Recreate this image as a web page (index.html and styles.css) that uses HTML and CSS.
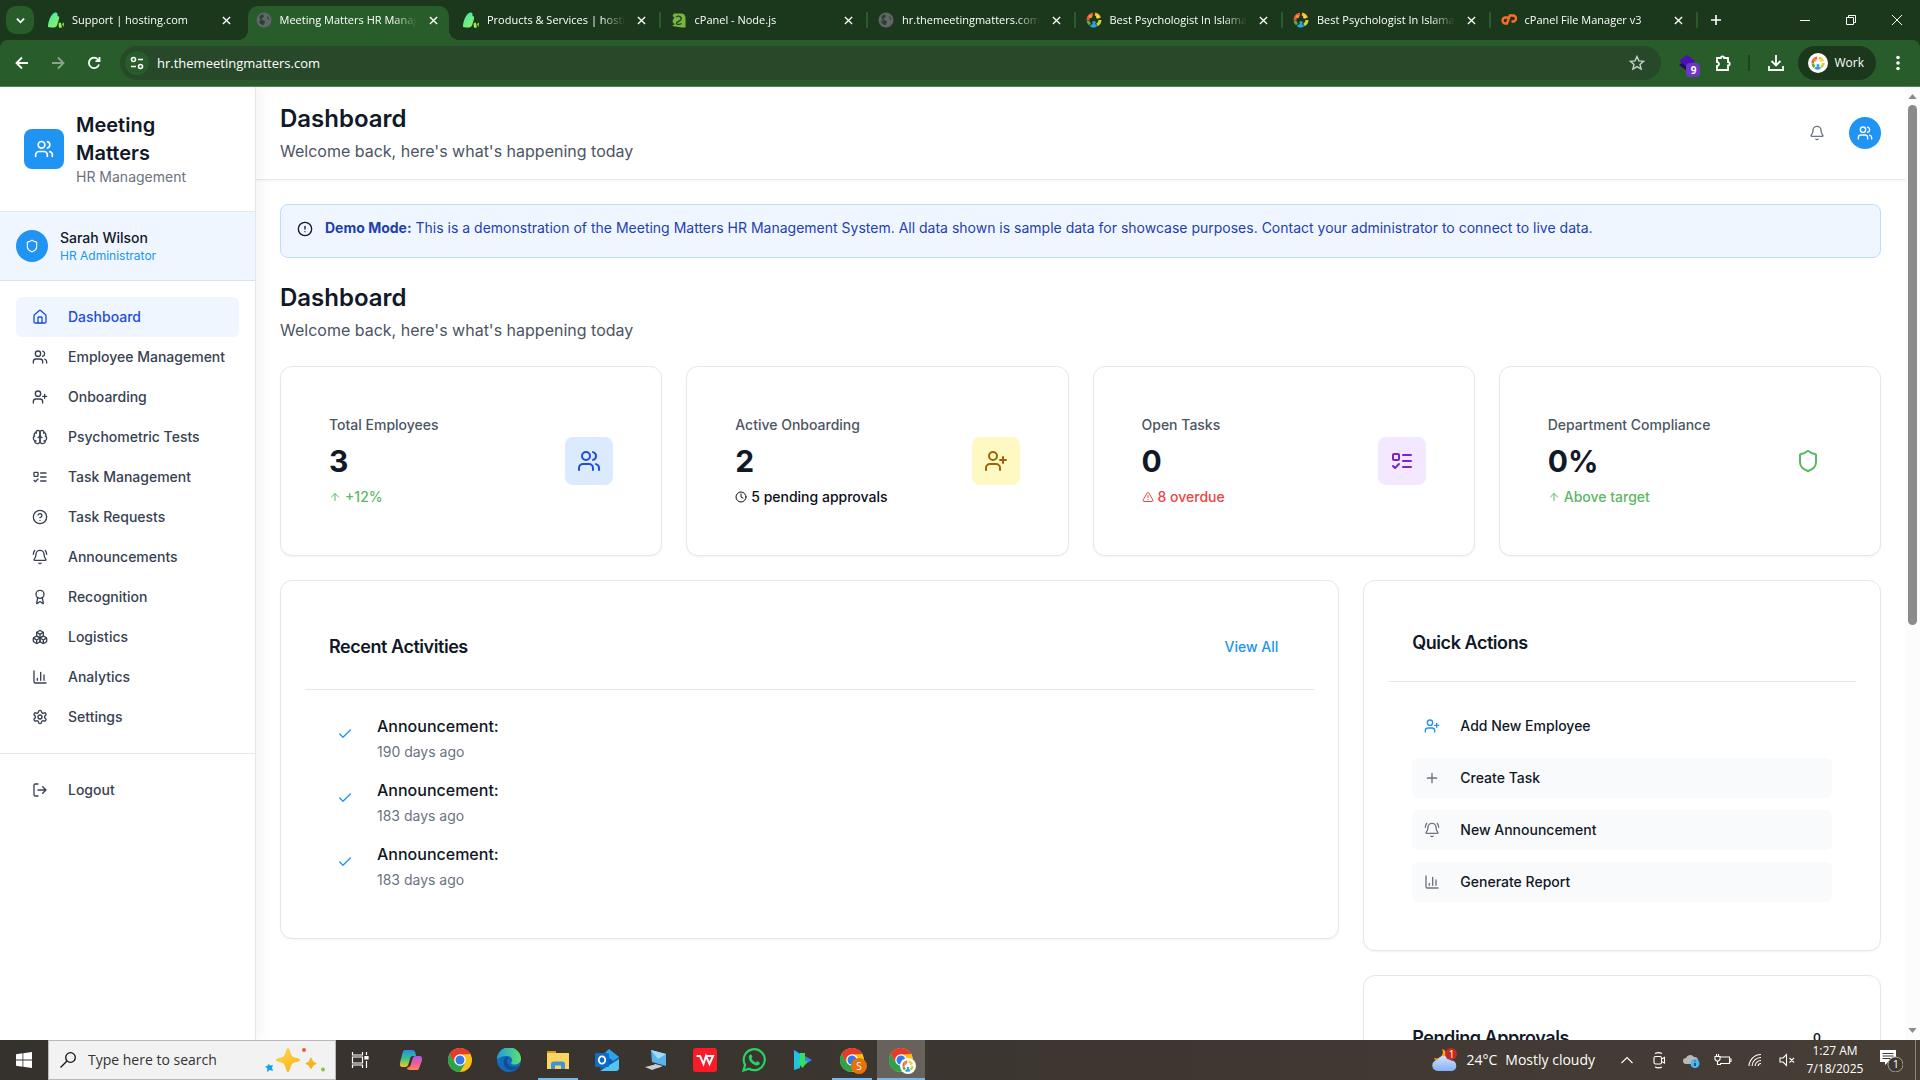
FILE: index.html
```html
<!DOCTYPE html>
<html lang="en">
<head>
<meta charset="utf-8">
<title>Meeting Matters HR Management</title>
<link rel="stylesheet" href="styles.css">
</head>
<body>
<svg class="sprite" aria-hidden="true">
  <defs>
    <linearGradient id="g-leaf" x1="0" y1="0" x2="1" y2="1"><stop offset="0" stop-color="#3fe6c0"/><stop offset="1" stop-color="#a6f23c"/></linearGradient>
    <linearGradient id="g-edge" x1="0" y1="0" x2="1" y2="0"><stop offset="0" stop-color="#1b9de2"/><stop offset="1" stop-color="#5fe06a"/></linearGradient>
    <linearGradient id="g-star" x1="0" y1="0" x2="1" y2="1"><stop offset="0" stop-color="#ffd84a"/><stop offset="1" stop-color="#f5a910"/></linearGradient>
    <linearGradient id="g-cop1" x1="0" y1="0" x2="0" y2="1"><stop offset="0" stop-color="#1f8fe8"/><stop offset=".5" stop-color="#3cc08a"/><stop offset="1" stop-color="#f6c81e"/></linearGradient>
    <linearGradient id="g-cop2" x1="0" y1="0" x2="0" y2="1"><stop offset="0" stop-color="#a45cf0"/><stop offset=".5" stop-color="#ef5aa0"/><stop offset="1" stop-color="#ff8a4c"/></linearGradient>
    <linearGradient id="g-cloud" x1="0" y1="0" x2="0" y2="1"><stop offset="0" stop-color="#cfe0fb"/><stop offset="1" stop-color="#86b1f3"/></linearGradient>
  </defs>
  <symbol id="users" viewBox="0 0 24 24"><path d="M16 21v-2a4 4 0 0 0-4-4H6a4 4 0 0 0-4 4v2"/><circle cx="9" cy="7" r="4"/><path d="M22 21v-2a4 4 0 0 0-3-3.87M16 3.13a4 4 0 0 1 0 7.75"/></symbol>
  <symbol id="user-plus" viewBox="0 0 24 24"><path d="M16 21v-2a4 4 0 0 0-4-4H6a4 4 0 0 0-4 4v2"/><circle cx="9" cy="7" r="4"/><path d="M19 8v6M22 11h-6"/></symbol>
  <symbol id="shield" viewBox="0 0 24 24"><path d="M20 13c0 5-3.5 7.5-7.66 8.95a1 1 0 0 1-.67-.01C7.5 20.5 4 18 4 13V6a1 1 0 0 1 1-1c2 0 4.5-1.2 6.24-2.72a1.17 1.17 0 0 1 1.52 0C14.51 3.81 17 5 19 5a1 1 0 0 1 1 1z"/></symbol>
  <symbol id="house" viewBox="0 0 24 24"><path d="M15 21v-8a1 1 0 0 0-1-1h-4a1 1 0 0 0-1 1v8"/><path d="M3 10a2 2 0 0 1 .709-1.528l7-5.999a2 2 0 0 1 2.582 0l7 5.999A2 2 0 0 1 21 10v9a2 2 0 0 1-2 2H5a2 2 0 0 1-2-2z"/></symbol>
  <symbol id="brain" viewBox="0 0 24 24"><path d="M12 5a3 3 0 1 0-5.997.125 4 4 0 0 0-2.526 5.77 4 4 0 0 0 .556 6.588A4 4 0 1 0 12 18Z"/><path d="M12 5a3 3 0 1 1 5.997.125 4 4 0 0 1 2.526 5.77 4 4 0 0 1-.556 6.588A4 4 0 1 1 12 18Z"/><path d="M15 13a4.5 4.5 0 0 1-3-4 4.5 4.5 0 0 1-3 4M17.599 6.5a3 3 0 0 0 .399-1.375M6.003 5.125A3 3 0 0 0 6.401 6.5M3.477 10.896a4 4 0 0 1 .585-.396M19.938 10.5a4 4 0 0 1 .585.396M6 18a4 4 0 0 1-1.967-.516M19.967 17.484A4 4 0 0 1 18 18"/></symbol>
  <symbol id="list-todo" viewBox="0 0 24 24"><rect x="3" y="5" width="6" height="6" rx="1"/><path d="m3 17 2 2 4-4M13 6h8M13 12h8M13 18h8"/></symbol>
  <symbol id="help" viewBox="0 0 24 24"><circle cx="12" cy="12" r="10"/><path d="M9.09 9a3 3 0 0 1 5.83 1c0 2-3 3-3 3M12 17h.01"/></symbol>
  <symbol id="bell-ring" viewBox="0 0 24 24"><path d="M10.268 21a2 2 0 0 0 3.464 0M22 8c0-2.3-.8-4.3-2-6M3.262 15.326A1 1 0 0 0 4 17h16a1 1 0 0 0 .74-1.673C19.41 13.956 18 12.499 18 8A6 6 0 0 0 6 8c0 4.499-1.411 5.956-2.738 7.326M4 2C2.8 3.7 2 5.7 2 8"/></symbol>
  <symbol id="bell" viewBox="0 0 24 24"><path d="M10.268 21a2 2 0 0 0 3.464 0M3.262 15.326A1 1 0 0 0 4 17h16a1 1 0 0 0 .74-1.673C19.41 13.956 18 12.499 18 8A6 6 0 0 0 6 8c0 4.499-1.411 5.956-2.738 7.326"/></symbol>
  <symbol id="award" viewBox="0 0 24 24"><path d="m15.477 12.89 1.515 8.526a.5.5 0 0 1-.81.47l-3.58-2.687a1 1 0 0 0-1.197 0l-3.586 2.686a.5.5 0 0 1-.81-.469l1.514-8.526"/><circle cx="12" cy="8" r="6"/></symbol>
  <symbol id="boxes" viewBox="0 0 24 24"><path d="M2.97 12.92A2 2 0 0 0 2 14.63v3.24a2 2 0 0 0 .97 1.71l3 1.8a2 2 0 0 0 2.06 0L12 19v-5.5l-5-3-4.03 2.42Z"/><path d="m7 16.5-4.74-2.85M7 16.5l5-3M7 16.5v5.17"/><path d="M12 13.5V19l3.97 2.38a2 2 0 0 0 2.06 0l3-1.8a2 2 0 0 0 .97-1.71v-3.24a2 2 0 0 0-.97-1.71L17 10.5l-5 3Z"/><path d="m17 16.5-5-3M17 16.5l4.74-2.85M17 16.5v5.17"/><path d="M7.97 4.42A2 2 0 0 0 7 6.13v4.37l5 3 5-3V6.13a2 2 0 0 0-.97-1.71l-3-1.8a2 2 0 0 0-2.06 0l-3 1.8Z"/><path d="M12 8 7.26 5.15M12 8l4.74-2.85M12 13.5V8"/></symbol>
  <symbol id="chart" viewBox="0 0 24 24"><path d="M3 3v16a2 2 0 0 0 2 2h16M18 17V9M13 17V5M8 17v-3"/></symbol>
  <symbol id="gear" viewBox="0 0 24 24"><path d="M12.22 2h-.44a2 2 0 0 0-2 2v.18a2 2 0 0 1-1 1.73l-.43.25a2 2 0 0 1-2 0l-.15-.08a2 2 0 0 0-2.73.73l-.22.38a2 2 0 0 0 .73 2.73l.15.1a2 2 0 0 1 1 1.72v.51a2 2 0 0 1-1 1.74l-.15.09a2 2 0 0 0-.73 2.73l.22.38a2 2 0 0 0 2.73.73l.15-.08a2 2 0 0 1 2 0l.43.25a2 2 0 0 1 1 1.73V20a2 2 0 0 0 2 2h.44a2 2 0 0 0 2-2v-.18a2 2 0 0 1 1-1.73l.43-.25a2 2 0 0 1 2 0l.15.08a2 2 0 0 0 2.73-.73l.22-.39a2 2 0 0 0-.73-2.73l-.15-.08a2 2 0 0 1-1-1.74v-.5a2 2 0 0 1 1-1.74l.15-.09a2 2 0 0 0 .73-2.73l-.22-.38a2 2 0 0 0-2.73-.73l-.15.08a2 2 0 0 1-2 0l-.43-.25a2 2 0 0 1-1-1.73V4a2 2 0 0 0-2-2z"/><circle cx="12" cy="12" r="3"/></symbol>
  <symbol id="logout" viewBox="0 0 24 24"><path d="M9 21H5a2 2 0 0 1-2-2V5a2 2 0 0 1 2-2h4M16 17l5-5-5-5M21 12H9"/></symbol>
  <symbol id="alert" viewBox="0 0 24 24"><circle cx="12" cy="12" r="10"/><path d="M12 8v4M12 16h.01"/></symbol>
  <symbol id="arrow-up" viewBox="0 0 24 24"><path d="m5 12 7-7 7 7M12 19V5"/></symbol>
  <symbol id="clock" viewBox="0 0 24 24"><circle cx="12" cy="12" r="10"/><path d="M12 6v6l4 2"/></symbol>
  <symbol id="warning" viewBox="0 0 24 24"><path d="m21.73 18-8-14a2 2 0 0 0-3.48 0l-8 14A2 2 0 0 0 4 21h16a2 2 0 0 0 1.73-3M12 9v4M12 17h.01"/></symbol>
  <symbol id="check" viewBox="0 0 24 24"><path d="M20 6 9 17l-5-5"/></symbol>
  <symbol id="plus" viewBox="0 0 24 24"><path d="M5 12h14M12 5v14"/></symbol>
  <symbol id="x" viewBox="0 0 10 10"><path d="M1 1l8 8M9 1l-8 8"/></symbol>
  <symbol id="leaf" viewBox="0 0 16 16"><path fill="url(#g-leaf)" d="M0 15C0 9 3 2 7 .5 9 0 10 1.500 9.500 4 11 4 11.500 5 11 7l-2 6.500C8 15 7 15.500 5.500 15.500L3 15.500zM10.500 12c.4-1.500 2-2 2.500-.8L14 15.500l-3 .2zM14 12l2-1.500-.5 4.500z"/></symbol>
  <symbol id="globe" viewBox="0 0 16 16"><circle cx="8" cy="8" r="7.500" fill="#62666a"/><path fill="#27452b" d="M3.500 4.500c1.200-1.500 2.500-2 4-2C7 3.500 8.200 4 7.500 5.200 6.500 6 5.500 6 5.500 7.200 6.500 8.500 9 8 9 10c0 1.300-1.300 1.800-1.500 3.300C5 12.800 3.200 11 2.800 9l2 .4C4.600 7.800 3.200 7 3.500 4.500zM11 3.800c1.200.8 2 2 2.300 3.700-1.200.4-2-.4-1.600-1.500.2-.8-.9-1.200-.7-2.200z"/></symbol>
  <symbol id="node" viewBox="0 0 16 16"><path fill="#7cb342" d="M3 1.500h7c3 0 4.500 2 4.500 4.500v9.500H11L1 14l3-2c-2-.5-3-2-2-4.500l1.500-2L1.500 4z"/><path fill="none" stroke="#1c4a1e" stroke-width="1.400" d="M5 5c3-2 6 0 5 2.500-1 2-4 2-4.500 3.500s3 2 5 .5"/></symbol>
  <symbol id="psy" viewBox="0 0 16 16"><g fill="none" stroke-width="3"><path stroke="#f05a3c" d="M2 8a6 6 0 0 1 5-6"/><path stroke="#fbc02d" d="M9 2a6 6 0 0 1 4.500 4"/><path stroke="#c8d63a" d="M14 8a6 6 0 0 1-3 5"/><path stroke="#66a83e" d="M2 8.500A6 6 0 0 0 4 12.500"/></g><path fill="#29a3e8" d="M4 14.500c.5-2 2-2 3-2.500L6 10l2-1 2 1-1 2c1 .5 2 1 2 2.500-2 1.500-5 1.500-7 0z"/><circle cx="4.500" cy="4.500" r="1.800" fill="#ff8a3c"/><circle cx="11.500" cy="5" r="1.500" fill="#ffd83a"/></symbol>
  <symbol id="cpanel" viewBox="0 0 16 16"><g fill="none" stroke="#ff6c2c" stroke-width="2.300"><path d="M7 5.500H4.500a3 3 0 0 0 0 6H6L8.800 3.500H12a3 3 0 0 1 0 6h-1.500"/></g></symbol>
  <symbol id="chrome" viewBox="0 0 24 24"><circle cx="12" cy="12" r="12" fill="#fbc116"/><path fill="#e33b2e" d="M1.600 6A12 12 0 0 1 22.400 6L12 6.600 6.800 15z"/><path fill="#2ba24c" d="M1.600 6A12 12 0 0 0 12 24l5.200-9-5.200 2.400L6.800 15z"/><circle cx="12" cy="12" r="5.800" fill="#fff"/><circle cx="12" cy="12" r="4.500" fill="#2f7cea"/></symbol>
</svg>

<header class="browser">
  <div class="tabstrip">
    <button class="tab-search" aria-label="Search tabs"><svg viewBox="0 0 10 10"><path d="M1 3l4 4 4-4"/></svg></button>
    <div class="tabs">
      <div class="tab"><svg class="fav"><use href="#leaf"/></svg><span class="tab-title">Support | hosting.com</span><button class="tab-close" aria-label="Close tab"><svg><use href="#x"/></svg></button></div>
      <div class="tab active"><svg class="fav"><use href="#globe"/></svg><span class="tab-title">Meeting Matters HR Management</span><button class="tab-close" aria-label="Close tab"><svg><use href="#x"/></svg></button></div>
      <div class="tab split"><svg class="fav"><use href="#leaf"/></svg><span class="tab-title">Products &amp; Services | hosting.com</span><button class="tab-close" aria-label="Close tab"><svg><use href="#x"/></svg></button></div>
      <div class="tab split"><svg class="fav"><use href="#node"/></svg><span class="tab-title">cPanel - Node.js</span><button class="tab-close" aria-label="Close tab"><svg><use href="#x"/></svg></button></div>
      <div class="tab split"><svg class="fav"><use href="#globe"/></svg><span class="tab-title">hr.themeetingmatters.com</span><button class="tab-close" aria-label="Close tab"><svg><use href="#x"/></svg></button></div>
      <div class="tab split"><svg class="fav"><use href="#psy"/></svg><span class="tab-title">Best Psychologist In Islamabad</span><button class="tab-close" aria-label="Close tab"><svg><use href="#x"/></svg></button></div>
      <div class="tab split"><svg class="fav"><use href="#psy"/></svg><span class="tab-title">Best Psychologist In Islamabad</span><button class="tab-close" aria-label="Close tab"><svg><use href="#x"/></svg></button></div>
      <div class="tab split"><svg class="fav"><use href="#cpanel"/></svg><span class="tab-title">cPanel File Manager v3</span><button class="tab-close" aria-label="Close tab"><svg><use href="#x"/></svg></button></div>
    </div>
    <button class="new-tab" aria-label="New tab"><svg viewBox="0 0 12 12"><path d="M6 1v10M1 6h10"/></svg></button>
    <div class="window-controls">
      <button aria-label="Minimize"><svg viewBox="0 0 10 10"><path d="M0 5.500h10"/></svg></button>
      <button aria-label="Restore"><svg viewBox="0 0 10 10"><path d="M.5 2.500h7v7h-7zM2.500 2.500v-2h7v7h-2"/></svg></button>
      <button aria-label="Close"><svg viewBox="0 0 10 10"><path d="M0 0l10 10M10 0L0 10"/></svg></button>
    </div>
  </div>
  <div class="toolbar">
    <button class="tool" aria-label="Back"><svg viewBox="0 0 16 16"><path d="M14 8H3M8 2.500L2.500 8 8 13.500"/></svg></button>
    <button class="tool dim" aria-label="Forward"><svg viewBox="0 0 16 16"><path d="M2 8h11M8 2.500L13.500 8 8 13.500"/></svg></button>
    <button class="tool" aria-label="Reload"><svg viewBox="0 0 16 16"><path d="M13 9.500A5.200 5.200 0 1 1 12 4.500l1.500 1.500M13.500 2v4.200h-4"/></svg></button>
    <div class="omnibox">
      <button class="site-info" aria-label="Site information"><svg viewBox="0 0 16 16"><circle cx="4.500" cy="4.500" r="2"/><path d="M9 4.500h5M2 11.500h5"/><circle cx="11.500" cy="11.500" r="2"/></svg></button>
      <input class="url" type="text" aria-label="Address" value="hr.themeetingmatters.com">
      <button class="star" aria-label="Bookmark"><svg viewBox="0 0 16 16"><path d="M8 1.500l1.900 4.400 4.700.4-3.600 3.100 1.100 4.700L8 11.600l-4.100 2.500L5 9.400 1.400 6.300l4.700-.4z"/></svg></button>
    </div>
    <div class="tool-group">
      <button class="tool ext" aria-label="Extension"><svg viewBox="0 0 18 18"><path d="M9 1l8 6-8 6-8-6z" fill="#4a0fb5" stroke="none"/><path d="M1 11l3-2 5 4 4-3v3l-4 4z" fill="#23086b" stroke="none"/></svg><span class="ext-badge">9</span></button>
      <button class="tool" aria-label="Extensions"><svg viewBox="0 0 16 16"><path d="M2 3h3.800a1.700 1.700 0 0 1 3.400 0H13v4a1.700 1.700 0 0 1 0 3.400V15H2v-4a2 2 0 0 0 0-4z"/></svg></button>
    </div>
    <span class="tool-divider"></span>
    <button class="tool" aria-label="Downloads"><svg viewBox="0 0 16 16"><path d="M8 0v10M3.500 6L8 10.500 12.500 6M1 11v4h14v-4"/></svg></button>
    <button class="profile"><span class="profile-pic"><svg><use href="#psy"/></svg></span>Work</button>
    <button class="tool" aria-label="Menu"><svg class="dots" viewBox="0 0 16 16"><circle cx="8" cy="2.500" r="1.800"/><circle cx="8" cy="8" r="1.800"/><circle cx="8" cy="13.500" r="1.800"/></svg></button>
  </div>
</header>

<div class="app">
  <aside class="sidebar">
    <div class="brand">
      <span class="brand-logo"><svg class="ico ico-20"><use href="#users"/></svg></span>
      <div><p class="brand-name">Meeting<br>Matters</p><p class="brand-sub">HR Management</p></div>
    </div>
    <div class="user">
      <span class="avatar"><svg class="ico ico-14"><use href="#shield"/></svg></span>
      <div><p class="user-name">Sarah Wilson</p><p class="user-role">HR Administrator</p></div>
    </div>
    <nav class="nav">
      <a class="nav-link current" href="#"><svg class="ico"><use href="#house"/></svg>Dashboard</a>
      <a class="nav-link" href="#"><svg class="ico"><use href="#users"/></svg>Employee Management</a>
      <a class="nav-link" href="#"><svg class="ico"><use href="#user-plus"/></svg>Onboarding</a>
      <a class="nav-link" href="#"><svg class="ico"><use href="#brain"/></svg>Psychometric Tests</a>
      <a class="nav-link" href="#"><svg class="ico"><use href="#list-todo"/></svg>Task Management</a>
      <a class="nav-link" href="#"><svg class="ico"><use href="#help"/></svg>Task Requests</a>
      <a class="nav-link" href="#"><svg class="ico"><use href="#bell-ring"/></svg>Announcements</a>
      <a class="nav-link" href="#"><svg class="ico"><use href="#award"/></svg>Recognition</a>
      <a class="nav-link" href="#"><svg class="ico"><use href="#boxes"/></svg>Logistics</a>
      <a class="nav-link" href="#"><svg class="ico"><use href="#chart"/></svg>Analytics</a>
      <a class="nav-link" href="#"><svg class="ico"><use href="#gear"/></svg>Settings</a>
    </nav>
    <div class="nav nav-foot">
      <button class="nav-link"><svg class="ico"><use href="#logout"/></svg>Logout</button>
    </div>
  </aside>

  <div class="page">
    <header class="page-head">
      <div><h1 class="title">Dashboard</h1><p class="subtitle">Welcome back, here's what's happening today</p></div>
      <div class="head-actions">
        <button class="bell" aria-label="Notifications"><svg class="ico"><use href="#bell"/></svg></button>
        <span class="avatar"><svg class="ico"><use href="#users"/></svg></span>
      </div>
    </header>
    <main class="content">
      <div class="notice" role="alert">
        <svg class="ico"><use href="#alert"/></svg>
        <p><strong>Demo Mode:</strong> This is a demonstration of the Meeting Matters HR Management System. All data shown is sample data for showcase purposes. Contact your administrator to connect to live data.</p>
      </div>
      <div><h2 class="title">Dashboard</h2><p class="subtitle">Welcome back, here's what's happening today</p></div>

      <section class="stats">
        <article class="card stat">
          <div class="stat-body"><p class="stat-label">Total Employees</p><p class="stat-value">3</p><p class="stat-note good"><svg class="ico ico-12"><use href="#arrow-up"/></svg>+12%</p></div>
          <span class="stat-icon blue"><svg class="ico ico-24"><use href="#users"/></svg></span>
        </article>
        <article class="card stat">
          <div class="stat-body"><p class="stat-label">Active Onboarding</p><p class="stat-value">2</p><p class="stat-note"><svg class="ico ico-12"><use href="#clock"/></svg>5 pending approvals</p></div>
          <span class="stat-icon yellow"><svg class="ico ico-24"><use href="#user-plus"/></svg></span>
        </article>
        <article class="card stat">
          <div class="stat-body"><p class="stat-label">Open Tasks</p><p class="stat-value">0</p><p class="stat-note bad"><svg class="ico ico-12"><use href="#warning"/></svg>8 overdue</p></div>
          <span class="stat-icon purple"><svg class="ico ico-24"><use href="#list-todo"/></svg></span>
        </article>
        <article class="card stat">
          <div class="stat-body"><p class="stat-label">Department Compliance</p><p class="stat-value">0%</p><p class="stat-note good"><svg class="ico ico-12"><use href="#arrow-up"/></svg>Above target</p></div>
          <span class="stat-icon good"><svg class="ico ico-24"><use href="#shield"/></svg></span>
        </article>
      </section>

      <section class="panels">
        <article class="card">
          <div class="card-head"><h3 class="card-title">Recent Activities</h3><button class="view-all">View All</button></div>
          <ul class="activities">
            <li class="activity"><span class="tick"><svg class="ico"><use href="#check"/></svg></span><div><p class="act-title">Announcement:</p><p class="act-time">190 days ago</p></div></li>
            <li class="activity"><span class="tick"><svg class="ico"><use href="#check"/></svg></span><div><p class="act-title">Announcement:</p><p class="act-time">183 days ago</p></div></li>
            <li class="activity"><span class="tick"><svg class="ico"><use href="#check"/></svg></span><div><p class="act-title">Announcement:</p><p class="act-time">183 days ago</p></div></li>
          </ul>
        </article>
        <div class="side">
          <article class="card">
            <div class="card-head"><h3 class="card-title">Quick Actions</h3></div>
            <div class="actions">
              <button class="action primary"><svg class="ico"><use href="#user-plus"/></svg>Add New Employee</button>
              <button class="action"><svg class="ico"><use href="#plus"/></svg>Create Task</button>
              <button class="action"><svg class="ico"><use href="#bell-ring"/></svg>New Announcement</button>
              <button class="action"><svg class="ico"><use href="#chart"/></svg>Generate Report</button>
            </div>
          </article>
          <article class="card">
            <div class="card-head"><h3 class="card-title">Pending Approvals</h3><span class="count">0</span></div>
          </article>
        </div>
      </section>
    </main>
  </div>
  <div class="scrollbar" aria-hidden="true">
    <svg viewBox="0 0 10 6"><path d="M5 0l5 6H0z"/></svg>
    <div class="track"><div class="thumb"></div></div>
    <svg viewBox="0 0 10 6"><path d="M0 0h10L5 6z"/></svg>
  </div>
</div>

<footer class="taskbar">
  <button class="start" aria-label="Start"><svg viewBox="0 0 16 16"><path fill="#fff" d="M0 2.200L6.500 1.300v6.300H0zM7.300 1.200L16 0v7.600H7.300zM0 8.400h6.500v6.300L0 13.800zM7.300 8.400H16V16l-8.700-1.200z"/></svg></button>
  <label class="search">
    <svg class="lens" viewBox="0 0 16 16"><circle cx="10.500" cy="5.500" r="4.800"/><path d="M7 9L.5 15.500"/></svg>
    <input type="text" aria-label="Search" placeholder="Type here to search">
    <svg class="sparkles" viewBox="0 0 60 24"><path fill="url(#g-star)" d="M23 0c2 0 2.500 7 4.500 8.500S35 10 35 12s-5.500 2-7.500 3.500S25 24 23 24s-2.500-7-4.500-8.500S11 14 11 12s5.500-2 7.500-3.500S21 0 23 0zM46 9.500c1 0 1.500 3.500 2.500 4.200s3 .8 3 1.800-2 1.200-3 2-1.500 3.500-2.500 3.500-1.500-2.700-2.500-3.500-3-1-3-2 2-1.100 3-1.800 1.500-4.200 2.500-4.200z"/><path fill="#12a5ef" d="M3 16l2.500 1.500L8 17l-1 2.500L8 23l-3-1-3 2 .3-3.500L0 18.500l2.500-.5z"/><circle cx="39" cy="2" r="2" fill="#f25c2a"/><circle cx="58" cy="21.500" r="2" fill="#86c440"/></svg>
  </label>
  <button class="task" aria-label="Task View"><svg class="line" viewBox="0 0 18 18"><path d="M1.500 1v3h10V1M1.500 17v-3h10v3M1.500 6h10v6h-10zM15.500 1v3M15.500 10v7"/><path d="M14 5.500h3v2.500h-3z" fill="#fff"/></svg></button>
  <div class="tasks">
    <button class="task" aria-label="Copilot"><svg viewBox="0 0 24 24"><path fill="url(#g-cop1)" d="M6 2h7c2 0 3 1 3.500 3l.5 3h-3c-2 0-2.500 1-3 3l-1.500 5c-.6 2-1.500 3-3.500 3H4c-3 0-3.600-2-2.800-5L3.500 5C4 3 4.500 2 6 2z"/><path fill="url(#g-cop2)" d="M18 22h-7c-2 0-3-1-3-2l2-1c1-.5 1.500-1.500 2-3l1.500-5c.6-2 1.500-3 3.500-3h3c3 0 3.600 2 2.800 5l-2.300 6c-.5 2-1 3-2.500 3z"/></svg></button>
    <button class="task" aria-label="Chrome"><svg><use href="#chrome"/></svg></button>
    <button class="task" aria-label="Edge"><svg viewBox="0 0 24 24"><circle cx="12" cy="12" r="12" fill="#1469b8"/><path fill="url(#g-edge)" d="M0 12A12 12 0 0 1 24 10.500c0 4-3 6-6.500 6-2.500 0-4-1-3-2.500 2-3-1-6-4.500-6C5 8 1 10 0 12z"/><path fill="#0f4f96" d="M9 9c-3.500 3-3 9 1 12 4 2 9 1 12-3-5 2.500-11 1-12-4-.3-2 .5-3.500 2-4.500z"/></svg></button>
    <button class="task open" aria-label="File Explorer"><svg viewBox="0 0 24 24"><path fill="#d89a12" d="M1 3h9v5H1z"/><path fill="#fcd462" d="M1 5h22v16H1z"/><path fill="#3f93d6" d="M5 21v-5c0-1.500 1-2.500 2.500-2.500h9c1.500 0 2.500 1 2.500 2.500v5h-4v-3.500H9V21z"/></svg></button>
    <button class="task" aria-label="Outlook"><svg viewBox="0 0 24 24"><path fill="#0a5cad" d="M5 8l9-7 10 8v12H5z"/><path fill="#2fa3e8" d="M14 1l10 8-6 4-9-7z"/><path fill="#55c3f2" d="M24 11v9c0 2-1 3-3 3H5z"/><rect y="5" width="14" height="14" rx="1" fill="#0f6cc4"/><ellipse cx="7" cy="12" rx="3.200" ry="3.600" fill="none" stroke="#fff" stroke-width="1.800"/></svg></button>
    <button class="task" aria-label="This PC"><svg viewBox="0 0 24 24"><path fill="#58b4ea" d="M7 2l15 4v12L8 14z"/><path fill="#a4dbf8" d="M7 2l15 4-8 5z"/><path fill="#c9ced3" d="M11 16l8 2-5 2-6-2zM1 19l8-2 7 2-8 3z"/></svg></button>
    <button class="task" aria-label="WPS Office"><svg viewBox="0 0 24 24"><rect width="24" height="24" rx="3" fill="#fb1b28"/><path fill="none" stroke="#fff" stroke-width="2" d="M3.500 8H7l3.500 8L13 8l3.500 8L20 8h-6.500"/></svg></button>
    <button class="task" aria-label="WhatsApp"><svg viewBox="0 0 24 24"><path fill="none" stroke="#25d366" stroke-width="2.200" d="M1.500 22.500l1.600-5.700a10.500 10.500 0 1 1 4 4z"/><path fill="#25d366" d="M8.300 6.500c.8-.3 1.200 0 1.500.8l.6 1.500c0 .7-.9 1.200-.9 1.700 1 2 2.300 3 4.300 4 .6 0 1-1.300 1.700-1.200l2.200 1.100c.3 1.800-1 3-2.800 3-4-.4-8-4.400-8.200-8 0-1.300.8-2.500 1.600-2.900z"/></svg></button>
    <button class="task" aria-label="Downloader"><svg viewBox="0 0 24 24"><path fill="#1a6fd4" d="M3 2l17 10L3 22z"/><path fill="#22c1e6" d="M3 2l6 4v14l-6 2z"/><path fill="#3a7fe8" d="M12 7l9 5-9 6z"/><path fill="#35e05c" d="M9 5h5v8h3l-5.500 7L6 13h3z"/></svg></button>
    <button class="task open" aria-label="Chrome, profile S"><svg><use href="#chrome"/></svg><span class="task-badge orange">S</span></button>
    <button class="task open selected" aria-label="Chrome, Work profile"><svg><use href="#chrome"/></svg><span class="task-badge"><svg><use href="#psy"/></svg></span></button>
  </div>
  <div class="tray">
    <button class="weather"><svg viewBox="0 0 26 24"><path fill="#f5a623" d="M10 1c3 5-2 11-8 9 2 6 12 5 13-2 .4-3-2-6-5-7z"/><path fill="url(#g-cloud)" d="M6 23a5.500 5.500 0 0 1-.5-11A7.500 7.500 0 0 1 19 12.500 5.300 5.300 0 0 1 20 23z"/><circle cx="19" cy="6" r="6" fill="#c42b1c"/></svg><span class="weather-count">1</span><span>24°C</span><span>Mostly cloudy</span></button>
    <div class="tray-icons">
      <button aria-label="Show hidden icons"><svg viewBox="0 0 16 16"><path d="M2.500 11L8 5.500l5.500 5.500"/></svg></button>
      <button aria-label="Meet now"><svg viewBox="0 0 16 16"><rect x="3" y="4.500" width="7.500" height="7.500" rx="1.500"/><path d="M10.500 7l3-1.500v5.500l-3-1.500M4 1.500c2-1 5-1 7 0M4 15c2 1 5 1 7 0"/></svg></button>
      <button aria-label="OneDrive"><svg viewBox="0 0 16 16"><path fill="#b9b9b9" stroke="none" d="M3 12A3 3 0 0 1 3 6a4.500 4.500 0 0 1 8-1 3.500 3.500 0 0 1 1 7z"/><circle cx="12" cy="11.500" r="4.500" fill="#4cb8f5" stroke="none"/><path stroke="#0d3a5c" stroke-width="1.600" d="M12 11v3M12 8.800v.8"/></svg></button>
      <button aria-label="Battery"><svg viewBox="0 0 16 16"><path d="M5 5h9.500v6.500H5M14.500 7H16v2.500h-1.500M0 4.500h5v3L3.500 9h-2L0 7.500zM1.500 4.500V2M3.500 4.500V2M2.500 9v3.500H6"/></svg></button>
      <button aria-label="Wi-Fi"><svg viewBox="0 0 16 16"><path d="M2 14A12 12 0 0 1 14 2.500M5 14a9 9 0 0 1 9-8.500M8 14a6 6 0 0 1 6-5.500M11 14a3 3 0 0 1 3-2.500"/></svg></button>
      <button aria-label="Volume muted"><svg viewBox="0 0 16 16"><path d="M1 6h3l3.500-3.500v11L4 10H1zM10.500 6l4.500 4.500M15 6l-4.500 4.500"/></svg></button>
    </div>
    <button class="time"><span>1:27 AM</span><span>7/18/2025</span></button>
    <button class="notify" aria-label="Notifications"><svg viewBox="0 0 24 24"><path fill="#fff" d="M1 2h16v12H9l-3 3v-3H1z"/><path stroke="#3f3832" stroke-width="1.200" d="M3.500 5.500h11M3.500 8h11M3.500 10.500h8"/><circle cx="16.500" cy="16.500" r="7.500" fill="#3f3832" stroke="#a8a29c"/></svg><span class="notify-count">1</span></button>
    <span class="desktop-peek"></span>
  </div>
</footer>
</body>
</html>
```

FILE: styles.css
```css
*, *::before, *::after { box-sizing: border-box; }
body, h1, h2, h3, p, ul { margin: 0; padding: 0; }
ul { list-style: none; }
button, input { font: inherit; color: inherit; background: none; border: 0; padding: 0; margin: 0; outline: 0; }
a { color: inherit; text-decoration: none; }
svg { display: block; flex: none; }

body {
  height: 100vh;
  display: flex;
  flex-direction: column;
  overflow: hidden;
  background: #fff;
  color: #111827;
  font-family: Inter, "Liberation Sans", sans-serif;
  font-size: 14px;
  line-height: 20px;
}

.sprite { position: absolute; width: 0; height: 0; }
.ico { width: 16px; height: 16px; fill: none; stroke: currentColor; stroke-width: 2; stroke-linecap: round; stroke-linejoin: round; }
.ico-12 { width: 12px; height: 12px; }
.ico-14 { width: 14px; height: 14px; }
.ico-20 { width: 20px; height: 20px; }
.ico-24 { width: 24px; height: 24px; }

/* Browser frame */
.browser, .taskbar { flex: none; font-family: "Open Sans", "Noto Sans", sans-serif; }
.browser { color: #fff; font-size: 11px; background: #1b381c; }
.tabstrip { display: flex; align-items: center; height: 40px; }
.tab-search { flex: none; display: grid; place-items: center; width: 28px; height: 28px; margin: 0 4px 0 6px; border-radius: 10px; background: #285d2b; }
.tab-search svg, .tab-close svg { width: 9px; height: 9px; fill: none; stroke: #fff; stroke-width: 2; }
.tab-close svg { stroke-width: 1.5; }
.tabs { flex: 1; min-width: 0; display: flex; height: 100%; padding-top: 6px; }
.tab { position: relative; flex: 1 1 0; min-width: 0; display: flex; align-items: center; gap: 8px; height: 34px; padding: 0 15px 6px 10px; }
.tab.split::after { content: ""; position: absolute; right: 0; top: 6px; width: 2px; height: 16px; background: #285d2b; }
.tab.active { background: #285d2b; border-radius: 10px 10px 0 0; margin: 0 4px 0 2px; padding: 0 11px 6px 8px; }
.tab.active::before, .tab.active::after { content: ""; position: absolute; bottom: 0; width: 10px; height: 10px; }
.tab.active::before { right: 100%; background: radial-gradient(circle at 0 0, transparent 10px, #285d2b 10px); }
.tab.active::after { left: 100%; background: radial-gradient(circle at 100% 0, transparent 10px, #285d2b 10px); }
.fav { width: 16px; height: 16px; }
.tab-title { flex: 1; min-width: 0; overflow: hidden; white-space: nowrap; -webkit-mask-image: linear-gradient(90deg, #000 calc(100% - 24px), transparent); mask-image: linear-gradient(90deg, #000 calc(100% - 24px), transparent); }
.tab-close { flex: none; width: 9px; height: 9px; margin-left: 4px; }
.new-tab { flex: none; display: grid; place-items: center; width: 28px; height: 28px; margin: 0 52px 0 4px; }
.new-tab svg { width: 12px; height: 12px; fill: none; stroke: #fff; stroke-width: 1.6; }
.window-controls { flex: none; display: flex; height: 40px; }
.window-controls button { display: grid; place-items: center; width: 46px; }
.window-controls svg { width: 10px; height: 10px; fill: none; stroke: #fff; stroke-width: 1; overflow: visible; }

.toolbar { display: flex; align-items: center; height: 47px; padding: 0 4px; background: #285d2b; border-bottom: 1px solid #568459; border-radius: 8px 8px 0 0; }
.tool { position: relative; display: grid; place-items: center; width: 36px; height: 34px; flex: none; }
.tool.dim { opacity: 0.45; }
.tool svg { width: 16px; height: 16px; fill: none; stroke: #fff; stroke-width: 1.8; overflow: visible; }
.tool .dots { fill: #fff; stroke: none; }
.tool.ext svg { width: 18px; height: 18px; }
.ext-badge { position: absolute; left: 17px; top: 17px; width: 14px; height: 14px; border-radius: 4px; background: #6b38c4; font-size: 10px; font-weight: 700; line-height: 14px; text-align: center; }
.omnibox { flex: 1; display: flex; align-items: center; gap: 8px; height: 34px; margin: 0 8px; padding: 0 16px 0 5px; border-radius: 17px; background: #27492a; }
.site-info { display: grid; place-items: center; width: 24px; height: 24px; border-radius: 50%; background: #285d2b; }
.site-info svg, .star svg { width: 16px; height: 16px; fill: none; stroke: #fff; stroke-width: 1.6; }
.star svg { stroke: #c5d2c6; stroke-width: 1.4; }
.url { flex: 1; min-width: 0; font-size: 13px; line-height: 20px; }
.tool-group { display: flex; }
.tool-divider { width: 2px; height: 16px; margin: 0 8px 0 7px; background: #1f4422; }
.profile { display: flex; align-items: center; gap: 6px; height: 34px; margin: 0 4px; padding: 0 12px 0 10px; border-radius: 17px; background: #1b381c; font-size: 12px; }
.profile-pic { display: grid; place-items: center; width: 20px; height: 20px; border-radius: 50%; background: #fff; }
.profile-pic svg { width: 14px; height: 14px; }

/* Application */
.app { flex: 1; min-height: 0; display: flex; overflow: hidden; }
.sidebar { position: relative; z-index: 1; flex: none; width: 256px; border-right: 1px solid #e5e7eb; background: #fff; box-shadow: 4px 0 12px rgba(0, 0, 0, 0.05); }
.brand { display: flex; align-items: center; gap: 12px; padding: 24px; border-bottom: 1px solid #e5e7eb; }
.brand-logo { display: grid; place-items: center; width: 40px; height: 40px; border-radius: 8px; background: #2094f3; color: #fff; }
.brand-name { font-size: 20px; line-height: 28px; font-weight: 600; }
.brand-sub { color: #6b7280; }
.user { display: flex; align-items: center; gap: 12px; padding: 16px; border-bottom: 1px solid #dde3ec; background: #eff6ff; }
.avatar { display: grid; place-items: center; width: 32px; height: 32px; border-radius: 50%; background: #2094f3; color: #fff; }
.user-name { font-weight: 500; }
.user-role { font-size: 12px; line-height: 16px; color: #2094f3; }
.nav { display: flex; flex-direction: column; padding: 16px; }
.nav-foot { border-top: 1px solid #e5e7eb; }
.nav-link { display: flex; align-items: center; gap: 20px; height: 40px; padding: 0 16px; border-radius: 6px; font-weight: 500; color: #374151; white-space: nowrap; }
.nav-link.current { background: #eff6ff; color: #1d4ed8; }

.page { flex: 1; min-width: 0; }
.page-head { display: flex; align-items: center; justify-content: space-between; padding: 16px 24px; border-bottom: 1px solid #e5e7eb; box-shadow: 0 1px 2px rgba(0, 0, 0, 0.05); }
.title { font-size: 24px; line-height: 32px; font-weight: 600; }
.subtitle { margin-top: 4px; font-size: 16px; line-height: 24px; color: #4b5563; }
.head-actions { display: flex; align-items: center; gap: 16px; }
.bell { display: grid; place-items: center; width: 32px; height: 32px; color: #6b7280; }
.content { display: flex; flex-direction: column; gap: 24px; padding: 24px; }
.notice { display: flex; gap: 12px; padding: 13px 16px 19px; border: 1px solid #bfdbfe; border-radius: 8px; background: #eff6ff; color: #1e40af; }
.notice .ico { margin-top: 3px; color: #111827; }
.notice strong { font-weight: 700; }

.card { padding: 24px; border: 1px solid #e5e7eb; border-radius: 12px; background: #fff; box-shadow: 0 1px 2px rgba(0, 0, 0, 0.05); }
.stats { display: grid; grid-template-columns: repeat(4, 1fr); gap: 24px; }
.stat { display: flex; align-items: center; justify-content: space-between; padding: 48px; }
.stat-body { display: flex; flex-direction: column; gap: 8px; }
.stat-label { font-weight: 500; color: #4b5563; }
.stat-value { font-size: 30px; line-height: 36px; font-weight: 700; }
.stat-note { display: flex; align-items: center; gap: 4px; font-weight: 500; color: #0a0f1a; }
.stat-icon { display: grid; place-items: center; width: 48px; height: 48px; border-radius: 8px; }
.stat .good { color: #5bb862; }
.stat .bad { color: #ef4444; }
.blue { background: #dbeafe; color: #1d4ed8; }
.yellow { background: #fef9c3; color: #a16207; }
.purple { background: #f3e8ff; color: #7e22ce; }

.panels { display: grid; grid-template-columns: repeat(3, minmax(0, 1fr)); gap: 24px; align-items: start; }
.panels > .card { grid-column: span 2; }
.side { display: flex; flex-direction: column; gap: 24px; }
.card-head { display: flex; align-items: center; justify-content: space-between; padding: 24px; border-bottom: 1px solid #e5e7eb; }
.card-title { font-size: 18px; line-height: 28px; font-weight: 600; letter-spacing: -0.025em; }
.view-all { height: 36px; padding: 0 12px; font-weight: 500; color: #2094f3; }
.activities { display: flex; flex-direction: column; gap: 16px; padding: 24px; }
.activity { display: flex; align-items: flex-start; gap: 16px; }
.tick { display: grid; place-items: center; width: 32px; height: 32px; margin-top: 4px; color: #2094f3; }
.act-title { font-size: 16px; line-height: 24px; font-weight: 500; }
.act-time { margin-top: 4px; color: #6b7280; }
.actions { display: flex; flex-direction: column; gap: 12px; padding: 24px; }
.action { display: flex; align-items: center; gap: 20px; height: 40px; padding: 0 12px; border-radius: 6px; background: #f9fafb; font-weight: 500; }
.action .ico { color: #6b7280; }
.action.primary { background: none; }
.action.primary .ico { color: #2094f3; }
.count { padding: 0 11px; font-size: 12px; line-height: 16px; font-weight: 600; }

.scrollbar { flex: none; display: flex; flex-direction: column; align-items: center; width: 15px; padding: 7px 0; background: #fcfcfc; }
.scrollbar svg { width: 9px; height: 5px; fill: #8b8b8b; }
.track { flex: 1; width: 9px; margin: 6px 0 10px; }
.thumb { height: 57%; border-radius: 5px; background: #8b8b8b; }

/* Taskbar */
.taskbar { position: relative; z-index: 2; display: flex; height: 40px; background: linear-gradient(90deg, #35312d, #3e3731 60%, #473e36); color: #fff; font-size: 14px; }
.start { display: grid; place-items: center; width: 48px; }
.start svg { width: 16px; height: 16px; }
.search { display: flex; align-items: center; width: 288px; padding: 0 10px 0 11px; border: 1px solid #b9b9b9; background: #f2f2f2; color: #2b2b2b; }
.lens { width: 16px; height: 16px; fill: none; stroke: #111; stroke-width: 1.3; }
.search input { flex: 1; min-width: 0; margin-left: 12px; font-size: 14px; }
.search input::placeholder { color: #333; opacity: 1; }
.sparkles { width: 60px; height: 24px; }
.task { position: relative; display: grid; place-items: center; width: 48px; height: 40px; }
.task svg { width: 24px; height: 24px; }
.task .line { width: 18px; height: 18px; fill: none; stroke: #fff; stroke-width: 1.2; }
.tasks { display: flex; gap: 1px; margin-left: 3px; }
.task.open::after { content: ""; position: absolute; left: 4px; right: 4px; bottom: 0; height: 2px; background: #76b9ed; }
.task.selected { background: #67625c; }
.task.selected::after { left: 0; right: 0; }
.task-badge { position: absolute; left: 23px; top: 18px; display: grid; place-items: center; width: 16px; height: 16px; border-radius: 50%; background: #fff; font-size: 10px; line-height: 16px; }
.task-badge.orange { background: #e8710a; }
.task-badge svg { width: 12px; height: 12px; }
.tray { display: flex; align-items: center; margin-left: auto; }
.weather { position: relative; display: flex; align-items: center; gap: 8px; margin-right: 16px; }
.weather svg { width: 26px; height: 24px; }
.weather-count { position: absolute; left: 13px; top: 0; width: 12px; font-size: 10px; line-height: 12px; text-align: center; }
.tray-icons { display: flex; }
.tray-icons button { display: grid; place-items: center; width: 32px; height: 40px; }
.tray-icons svg { width: 16px; height: 16px; fill: none; stroke: #fff; stroke-width: 1.1; overflow: visible; }
.time { display: flex; flex-direction: column; align-items: center; width: 64px; font-size: 12px; line-height: 18px; }
.notify { position: relative; display: grid; place-items: center; width: 48px; height: 40px; }
.notify svg { width: 24px; height: 24px; }
.notify-count { position: absolute; left: 22px; top: 16px; width: 14px; font-size: 11px; line-height: 16px; text-align: center; }
.desktop-peek { width: 5px; height: 40px; border-left: 1px solid #8a847e; }
```
